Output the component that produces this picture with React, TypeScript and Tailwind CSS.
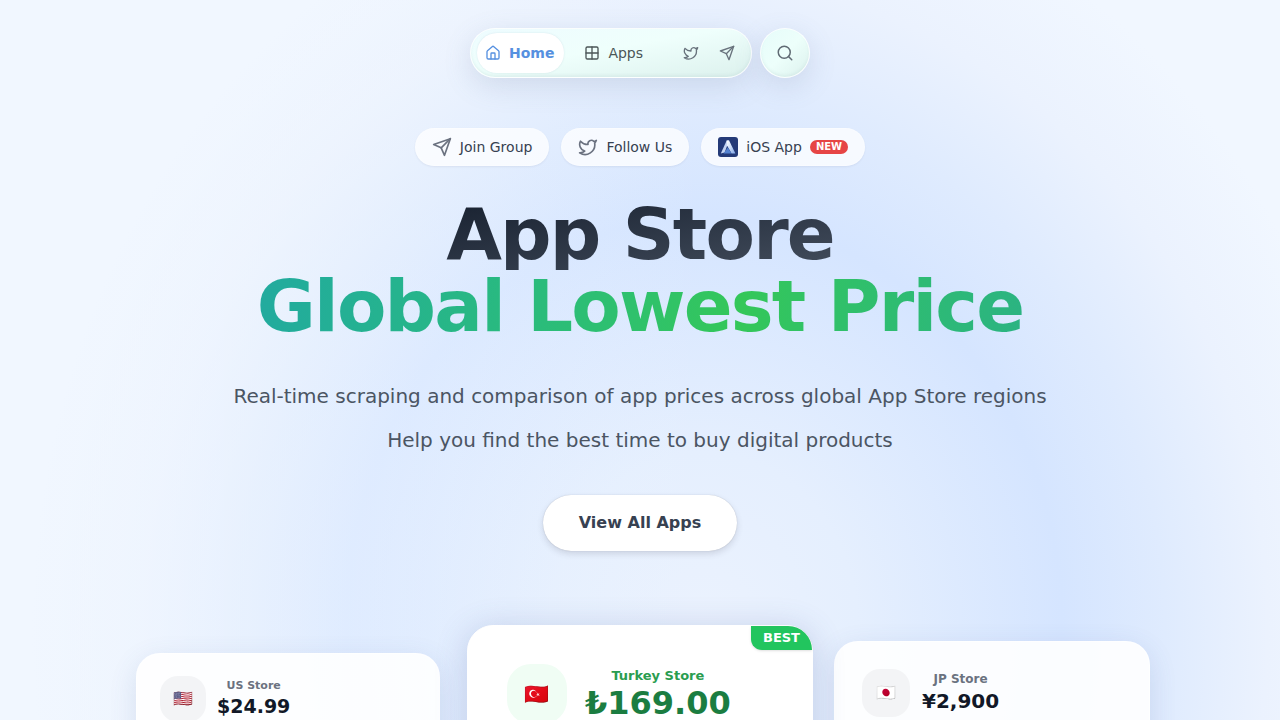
import { Grid2x2, House, Search, Twitter } from "lucide-react"

interface IconProps {
    className?: string
}

function SendIcon({ className }: IconProps) {
    return (
        <svg
            viewBox="0 0 24 24"
            fill="none"
            stroke="currentColor"
            strokeWidth="2"
            strokeLinecap="round"
            strokeLinejoin="round"
            className={className}
            aria-hidden="true"
        >
            <path d="m22 2-7 20-4-9-9-4Z" />
            <path d="M22 2 11 13" />
        </svg>
    )
}

function AppLogo({ className }: IconProps) {
    return (
        <svg viewBox="0 0 20 20" className={className} aria-hidden="true">
            <defs>
                <linearGradient id="logoSide" x1="0" y1="0" x2="1" y2="1">
                    <stop offset="0" stopColor="#ffffff" />
                    <stop offset="0.5" stopColor="#c9daf6" />
                    <stop offset="1" stopColor="#7ea6e8" />
                </linearGradient>
            </defs>
            <rect width="20" height="20" rx="3" fill="#243a78" />
            <path d="M8.7 3.6h2.4L6.6 15.4 2.8 16.4Z" fill="#c3d3f2" />
            <path d="M8.7 3.6h2.4l6.3 12.8h-3.8L8.9 8.2Z" fill="url(#logoSide)" />
            <path d="m9.8 10.4 3.8 6H5.6Z" fill="#5482d0" />
        </svg>
    )
}

function TopNav() {
    return (
        <header className="flex justify-center gap-2">
            <nav className="flex h-[50px] items-center rounded-full border border-white/80 bg-linear-to-br from-[#eefcff] via-[#effffc] via-45% to-[#dcf1ed] pr-2 pl-[6px] shadow-[0_8px_28px_rgba(100,115,150,0.18),inset_0_-2px_3px_rgba(170,200,200,0.2)]">
                <a
                    href="#home"
                    className="flex h-10 items-center gap-2 rounded-full bg-white px-2 pr-[10px] text-sm font-bold text-[#5690e0] shadow-[0_0_2px_rgba(100,130,160,0.18)]"
                >
                    <House className="size-4" />
                    Home
                </a>
                <a href="#apps" className="ml-1 flex h-10 items-center gap-2 px-4 text-sm text-[#4b5657]">
                    <Grid2x2 className="size-4" />
                    Apps
                </a>
                <div className="ml-4 flex gap-1 text-[#68727c]">
                    <a href="#twitter" aria-label="Twitter" className="flex size-8 items-center justify-center">
                        <Twitter className="size-4" />
                    </a>
                    <a href="#telegram" aria-label="Telegram" className="flex size-8 items-center justify-center">
                        <SendIcon className="size-4" />
                    </a>
                </div>
            </nav>
            <button
                type="button"
                aria-label="Search"
                className="flex size-[50px] items-center justify-center rounded-full border border-white/80 bg-linear-to-br from-[#e6fcfa] via-[#edfffb] to-[#dcf1ed] text-[#606b74] shadow-[0_8px_28px_rgba(100,115,150,0.18),inset_0_-2px_3px_rgba(170,200,200,0.2)]"
            >
                <Search className="size-[18px]" />
            </button>
        </header>
    )
}

const chipClass =
    "flex h-[38px] items-center gap-2 rounded-full border border-white/30 bg-white/75 px-4 text-sm text-[#374151] shadow-[0_1px_2px_rgba(60,70,90,0.08)]"

function Chips() {
    return (
        <div className="mt-[50px] flex flex-wrap justify-center gap-3">
            <a href="#group" className={chipClass}>
                <SendIcon className="size-5 text-[#6b7280]" />
                Join Group
            </a>
            <a href="#follow" className={chipClass}>
                <Twitter className="size-5 text-[#6b7280]" />
                Follow Us
            </a>
            <a href="#ios" className={chipClass}>
                <AppLogo className="size-5" />
                iOS App
                <span className="rounded-full bg-[#e64545] px-[6px] text-[10px] leading-[14px] font-bold text-white">
                    NEW
                </span>
            </a>
        </div>
    )
}

function Flag({ country }: { country: string }) {
    return <span className="font-['Noto_Color_Emoji',sans-serif]">{country}</span>
}

function PriceCards() {
    return (
        <section className="mx-auto mt-[74px] grid w-full max-w-5xl grid-cols-3 items-start gap-8">
            <article className="mx-2 mt-7 flex h-40 items-start gap-[11px] rounded-3xl border border-white/60 bg-white/90 px-[23px] pt-[22px] shadow-[0_8px_28px_rgba(70,90,150,0.14)]">
                <div className="flex size-[46px] items-center justify-center rounded-[18px] bg-[#f3f4f6] text-base">
                    <Flag country="🇺🇸" />
                </div>
                <div className="pt-[2px] text-center font-bold">
                    <h2 className="text-[11px] leading-4 text-[#6b7280]">US Store</h2>
                    <p className="text-[19px] leading-6 text-[#111827]">$24.99</p>
                </div>
            </article>

            <article className="relative -mx-[13px] flex h-48 items-start gap-[18px] rounded-[26px] border border-white bg-white px-[39px] pt-[38px] shadow-[0_4px_32px_rgba(70,90,160,0.24)]">
                <span className="absolute top-0 right-0 rounded-tr-[26px] rounded-bl-xl bg-[#22c55e] px-3 text-[13px] leading-6 font-bold text-white shadow-sm">
                    BEST
                </span>
                <div className="flex size-[60px] items-center justify-center rounded-3xl bg-[#f0fdf4] text-xl">
                    <Flag country="🇹🇷" />
                </div>
                <div className="pt-1 text-center font-bold">
                    <h2 className="text-[13px] leading-4 text-[#2a9d50]">Turkey Store</h2>
                    <p className="text-[32px] leading-[38px] text-[#1b7d41]">₺169.00</p>
                </div>
            </article>

            <article className="mx-[2px] mt-4 flex h-44 items-start gap-3 rounded-3xl border border-white/60 bg-white/90 p-[27px] shadow-[0_8px_28px_rgba(70,90,150,0.14)]">
                <div className="flex size-12 items-center justify-center rounded-[18px] bg-[#f3f4f6] text-base">
                    <Flag country="🇯🇵" />
                </div>
                <div className="pt-[2px] text-center font-bold">
                    <h2 className="text-xs leading-4 text-[#6b7280]">JP Store</h2>
                    <p className="text-[20px] leading-7 text-[#111827]">¥2,900</p>
                </div>
            </article>
        </section>
    )
}

export default function App() {
    return (
        <div className="min-h-screen overflow-hidden bg-[#f1f7ff] bg-[linear-gradient(90deg,rgba(241,247,255,0.6)_10%,rgba(241,247,255,0)_55%),radial-gradient(50%_90%_at_55%_77%,#ebf2fe_0%,#e5effe_24%,#d5e5ff_56%,#dfebfe_72%,#ebf2fe_88%,#f1f7ff_105%)] pt-7 font-['DejaVu_Sans',sans-serif]">
            <TopNav />
            <main>
                <Chips />
                <h1 className="mt-8 text-center text-7xl leading-[72px] font-bold tracking-tight">
                    <span className="inline-block bg-linear-to-br from-[#182130] to-[#434d5c] bg-clip-text text-transparent">
                        App Store
                    </span>
                    <br />
                    <span className="inline-block bg-linear-100 from-[#22aa9f] via-[#34c759] via-63% to-[#2bb382] bg-clip-text text-transparent">
                        Global Lowest Price
                    </span>
                </h1>
                <p className="mt-8 text-center text-xl leading-[44px] text-[#4b5563]">
                    Real-time scraping and comparison of app prices across global App Store regions
                    <br />
                    Help you find the best time to buy digital products
                </p>
                <div className="mt-[33px] flex justify-center">
                    <button
                        type="button"
                        className="h-14 rounded-full bg-white px-9 font-bold text-[#374151] shadow-[0_0_1px_rgba(60,60,70,0.3),0_3px_6px_rgba(60,60,80,0.16)]"
                    >
                        View All Apps
                    </button>
                </div>
                <PriceCards />
            </main>
        </div>
    )
}
